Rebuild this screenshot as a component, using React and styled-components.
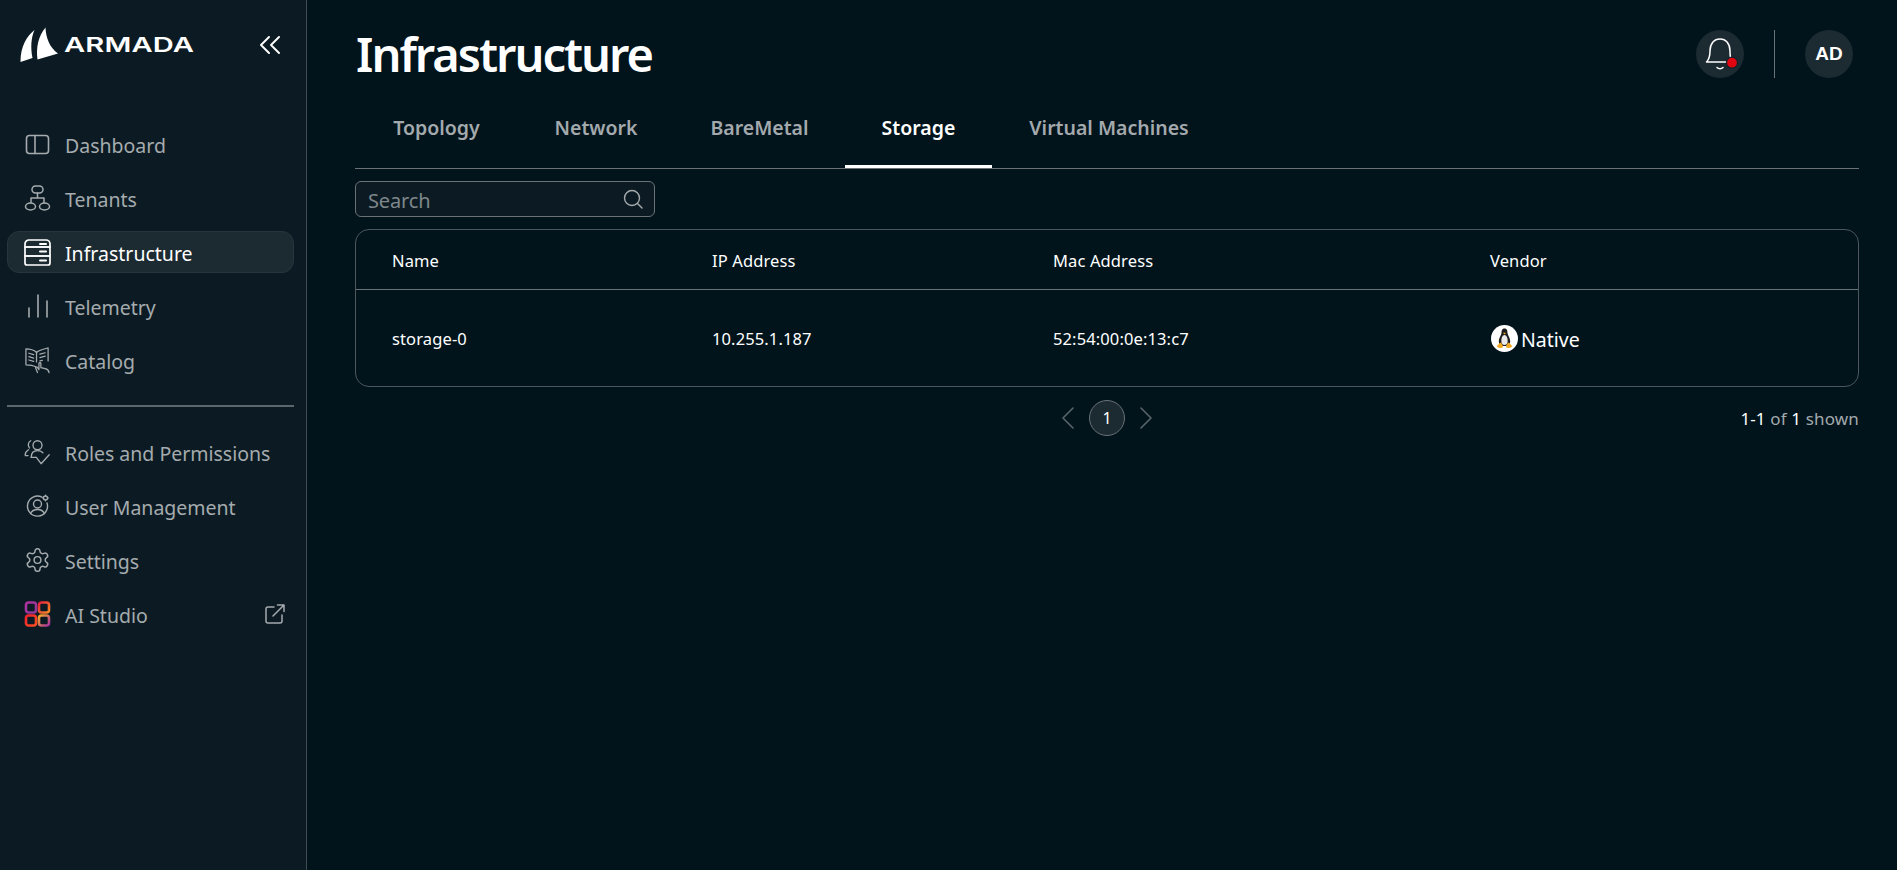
import React from "react";
import styled, { createGlobalStyle } from "styled-components";

const Global = createGlobalStyle`
  html, body { margin: 0; padding: 0; height: 100%; background: #01141c; overflow: hidden; }
  * { box-sizing: border-box; }
  body { font-family: "Noto Sans", "Open Sans", sans-serif; }
`;

const Page = styled.div`
  display: flex;
  width: 1897px;
  height: 870px;
  background: #01141c;
  color: #fff;
`;

const Sidebar = styled.aside`
  width: 307px;
  flex: none;
  height: 100%;
  background: #0c1b23;
  border-right: 1px solid #414c52;
  padding: 0 12px 0 7px;
  display: flex;
  flex-direction: column;
`;

const Brand = styled.div`
  height: 123px;
  display: flex;
  align-items: flex-start;
  justify-content: space-between;
  padding: 27px 13px 0 12px;
`;

const LogoWrap = styled.div`
  display: flex;
  align-items: center;
  gap: 5px;
  height: 36px;
`;

const LogoWord = styled.span`
  font-family: "Inter", sans-serif;
  font-weight: 600;
  font-size: 20.5px;
  letter-spacing: 0.1px;
  display: inline-block;
  transform: scaleX(1.42);
  transform-origin: left center;
  line-height: 1;
  color: #fff;
`;

const Collapse = styled.button`
  background: none;
  border: 0;
  padding: 0;
  margin-top: 9px;
  display: flex;
  color: #fff;
`;

const NavList = styled.nav`
  display: flex;
  flex-direction: column;
  gap: 12px;
`;

const NavItem = styled.a`
  height: 42px;
  display: flex;
  align-items: center;
  gap: 14px;
  padding: 0 8px 0 16px;
  border-radius: 12px;
  border: 1px solid ${(p) => (p.$active ? "#27353c" : "transparent")};
  background: ${(p) => (p.$active ? "#1c2a32" : "transparent")};
  color: ${(p) => (p.$active ? "#ffffff" : "#a5abae")};
  font-size: 19.5px;
  line-height: 1;
`;

const NavIcon = styled.span`
  width: 27px;
  height: 30px;
  flex: none;
  display: flex;
  align-items: center;
  justify-content: center;
  color: ${(p) => (p.$active ? "#ffffff" : "#a5abae")};
`;

const NavLabel = styled.span`
  flex: 1;
  white-space: nowrap;
  padding-top: 3px;
`;

const Rule = styled.hr`
  border: 0;
  height: 2px;
  background: #5c666b;
  margin: 24px 0 24px;
`;

const Main = styled.main`
  flex: 1;
  min-width: 0;
  padding: 30px 38px 0 48px;
  display: flex;
  flex-direction: column;
`;

const TopBar = styled.header`
  height: 48px;
  display: flex;
  align-items: center;
  justify-content: space-between;
  padding-right: 6px;
`;

const Title = styled.h1`
  margin: 0 0 0 1px;
  font-size: 47px;
  font-weight: 600;
  letter-spacing: -2px;
  line-height: 48px;
  color: #fff;
`;

const TopActions = styled.div`
  display: flex;
  align-items: center;
`;

const RoundBtn = styled.div`
  width: 48px;
  height: 48px;
  border-radius: 50%;
  background: #1c2a32;
  display: flex;
  align-items: center;
  justify-content: center;
  font-family: "Liberation Sans", sans-serif;
  font-weight: 700;
  font-size: 19px;
  color: #fff;
`;

const VDivider = styled.div`
  width: 1px;
  height: 48px;
  background: #6a7377;
  margin: 0 30px;
`;

const Tabs = styled.div`
  margin-top: 10px;
  height: 81px;
  border-bottom: 1px solid #6a7276;
  display: flex;
`;

const Tab = styled.div`
  height: 80px;
  width: ${(p) => p.$w}px;
  display: flex;
  align-items: center;
  justify-content: center;
  font-size: 19.5px;
  font-weight: 600;
  letter-spacing: 0;
  color: ${(p) => (p.$active ? "#ffffff" : "#a3a9ac")};
  border-bottom: 3px solid ${(p) => (p.$active ? "#ffffff" : "transparent")};
  padding-top: 1px;
`;

const SearchBox = styled.div`
  margin-top: 12px;
  width: 300px;
  height: 36px;
  border: 1px solid #6a7276;
  border-radius: 6px;
  background: #0c1b23;
  display: flex;
  align-items: center;
  justify-content: space-between;
  padding: 2px 10px 0 12px;
  color: #7e878b;
  font-size: 20px;
  letter-spacing: -0.15px;
`;

const SearchIcon = styled.svg`
  width: 22px;
  height: 22px;
  margin-top: -2px;
  color: #a5abae;
`;

const TableCard = styled.div`
  margin-top: 12px;
  border: 1px solid #4d575c;
  border-radius: 14px;
  height: 158px;
`;

const Row = styled.div`
  display: grid;
  grid-template-columns: 320px 341px 437px 1fr;
  align-items: center;
  padding-left: 36px;
  height: ${(p) => p.$h}px;
  padding-top: ${(p) => (p.$head ? 1 : 0)}px;
  border-bottom: ${(p) => (p.$head ? "1px solid #6a7276" : "none")};
  font-size: 16.5px;
  letter-spacing: 0.12px;
  color: #fff;
`;

const VendorCell = styled.div`
  display: flex;
  align-items: center;
  gap: 3px;
  padding-left: 1px;
  font-size: 19.5px;
  letter-spacing: 0;
`;

const VendorName = styled.span`
  padding-top: 2px;
`;

const TuxBadge = styled.svg`
  width: 27px;
  height: 27px;
  flex: none;
`;

const Footer = styled.div`
  margin-top: 13px;
  display: grid;
  grid-template-columns: 1fr auto 1fr;
  align-items: center;
  height: 36px;
`;

const Pager = styled.div`
  grid-column: 2;
  display: flex;
  align-items: center;
  gap: 14px;
  color: #596469;
`;

const PageNum = styled.div`
  width: 36px;
  height: 36px;
  border-radius: 50%;
  background: #1c2a32;
  border: 1px solid #6a7276;
  display: flex;
  align-items: center;
  justify-content: center;
  color: #fff;
  font-size: 16px;
`;

const Shown = styled.div`
  justify-self: end;
  font-size: 17px;
  letter-spacing: 0.15px;
  color: #a3a9ac;
`;

const Strong = styled.span`
  color: #fff;
`;

const S = { fill: "none", stroke: "currentColor", strokeLinecap: "round", strokeLinejoin: "round" };

const Logo = () => (
  <svg width="40" height="36" viewBox="0 0 40 36" fill="#fff">
    <path d="M15.5 3 C8 9 1.5 19 1.5 35 L13.5 31 C11.5 21 12 11 15.5 3 Z" />
    <path d="M27 0 L26.5 1 C27 11 31 21 39 26.5 L18.5 32.5 C17 21 19 9 27 0 Z" />
  </svg>
);

const IconDashboard = () => (
  <svg width="25" height="21" viewBox="0 0 25 21" {...S} strokeWidth="1.6">
    <rect x="1.5" y="1.5" width="22" height="18" rx="3" />
    <path d="M10 1.5 V19.5" />
  </svg>
);
const IconTenants = () => (
  <svg width="27" height="26" viewBox="0 0 27 26" {...S} strokeWidth="1.5">
    <rect x="8" y="1" width="11" height="7" rx="3.5" />
    <path d="M13.5 8 V13 M7 17.5 V13 H20 V17.5" />
    <ellipse cx="6.5" cy="21.5" rx="5" ry="3.5" />
    <ellipse cx="20.5" cy="21.5" rx="5" ry="3.5" />
  </svg>
);
const IconInfra = () => (
  <svg width="27" height="27" viewBox="0 0 27 27" {...S} strokeWidth="1.7">
    <path d="M1 8 V5 A4 4 0 0 1 5 1 H22 A4 4 0 0 1 26 5 V8 Z" />
    <path d="M1 8 H26 V17 H1 Z" />
    <path d="M1 17 H26 V24 A2 2 0 0 1 24 26 H3 A2 2 0 0 1 1 24 Z" />
    <path d="M16 5 H22 M16 12.5 H22 M16 21.5 H22" strokeWidth="2" />
  </svg>
);
const IconTelemetry = () => (
  <svg width="24" height="26" viewBox="0 0 24 26" {...S} strokeWidth="1.6">
    <path d="M3 24 V15 M12 24 V2 M21 24 V8" />
  </svg>
);
const IconCatalog = () => (
  <svg width="28" height="28" viewBox="0 0 28 28" {...S} strokeWidth="1.3">
    <path d="M13 6 C10 3.5 6 2.5 2 2.5 V19 C6 19 9.5 19.5 12 21" />
    <path d="M13 6 C16 3.5 21 2.5 25 1.5 V15" />
    <path d="M13 6 V16" />
    <path d="M5 7 L10 8.5 M5 10.5 L10 12 M5 14 L10 15.5 M16.5 8 L22 6.5 M16.5 11.5 L22 10 M16.5 15 L19 14.5" />
    <path d="M14 27 L12 22 C12 21 13.5 21 14 22 L15.5 24 V17.5 C15.5 16.3 17.5 16.3 17.5 17.5 V22 L22 23 C24 23.5 25.5 24 26 27" />
  </svg>
);
const IconRoles = () => (
  <svg width="30" height="30" viewBox="0 0 30 30" {...S} strokeWidth="1.5">
    <circle cx="15" cy="7.5" r="5" />
    <path d="M7.5 2.5 C4.5 4 4 8 6 10.5" />
    <path d="M5 12.5 C2.5 14 1 16.5 1.5 19 L4.5 19" />
    <path d="M8 21 C8 16 10.5 13.5 15 13.5 C18 13.5 20 14.5 21 16" />
    <path d="M8 21 H14 M14.5 22 L19 28 L28 18" />
  </svg>
);
const IconUser = () => (
  <svg width="24" height="24" viewBox="0 0 24 24" {...S} strokeWidth="1.4">
    <path d="M16 3.2 A10 10 0 1 0 21 9" />
    <circle cx="11.5" cy="10" r="4" />
    <path d="M4.5 19.5 C6 16.5 8.5 15.5 11.5 15.5 C14.5 15.5 17 16.5 18.5 19.5" />
    <circle cx="19.5" cy="4" r="2" />
    <path d="M19.5 1 V2 M19.5 6 V7 M16.5 4 H17.5 M21.5 4 H22.5" strokeWidth="1" />
  </svg>
);
const IconSettings = () => (
  <svg width="28" height="28" viewBox="0 0 24 24" {...S} strokeWidth="1.3">
    <path d="M12.22 2h-.44a2 2 0 0 0-2 2v.18a2 2 0 0 1-1 1.73l-.43.25a2 2 0 0 1-2 0l-.15-.08a2 2 0 0 0-2.73.73l-.22.38a2 2 0 0 0 .73 2.73l.15.1a2 2 0 0 1 1 1.72v.51a2 2 0 0 1-1 1.74l-.15.09a2 2 0 0 0-.73 2.73l.22.38a2 2 0 0 0 2.73.73l.15-.08a2 2 0 0 1 2 0l.43.25a2 2 0 0 1 1 1.73V20a2 2 0 0 0 2 2h.44a2 2 0 0 0 2-2v-.18a2 2 0 0 1 1-1.73l.43-.25a2 2 0 0 1 2 0l.15.08a2 2 0 0 0 2.73-.73l.22-.39a2 2 0 0 0-.73-2.73l-.15-.08a2 2 0 0 1-1-1.74v-.5a2 2 0 0 1 1-1.74l.15-.09a2 2 0 0 0 .73-2.73l-.22-.38a2 2 0 0 0-2.73-.73l-.15.08a2 2 0 0 1-2 0l-.43-.25a2 2 0 0 1-1-1.73V4a2 2 0 0 0-2-2z" />
    <circle cx="12" cy="12" r="3" />
  </svg>
);
const IconStudio = () => (
  <svg width="28" height="28" viewBox="0 0 27 27" fill="none" strokeWidth="2.6">
    <defs>
      <linearGradient id="ga" x1="0" y1="0" x2="1" y2="1">
        <stop offset="0" stopColor="#b0309f" />
        <stop offset="1" stopColor="#8a3a9a" />
      </linearGradient>
      <linearGradient id="gb" x1="0" y1="0" x2="1" y2="1">
        <stop offset="0" stopColor="#e8203f" />
        <stop offset="1" stopColor="#f58a20" />
      </linearGradient>
      <linearGradient id="gc" x1="0" y1="0" x2="1" y2="1">
        <stop offset="0" stopColor="#f5202e" />
        <stop offset="1" stopColor="#f8501f" />
      </linearGradient>
      <linearGradient id="gd" x1="0" y1="0" x2="1" y2="1">
        <stop offset="0" stopColor="#fba824" />
        <stop offset="1" stopColor="#a4309f" />
      </linearGradient>
    </defs>
    <rect x="2" y="2" width="10" height="10" rx="2.5" stroke="url(#ga)" />
    <rect x="15" y="2" width="10" height="10" rx="2.5" stroke="url(#gb)" />
    <rect x="2" y="15" width="10" height="10" rx="2.5" stroke="url(#gc)" />
    <rect x="15" y="15" width="10" height="10" rx="2.5" stroke="url(#gd)" />
  </svg>
);
const IconExternal = () => (
  <svg width="20" height="20" viewBox="0 0 20 20" {...S} strokeWidth="1.5" color="#a5abae">
    <path d="M9 3 H3 A2 2 0 0 0 1 5 V17 A2 2 0 0 0 3 19 H15 A2 2 0 0 0 17 17 V11" />
    <path d="M8 12 L19 1 M12.5 1 H19 V7.5" />
  </svg>
);
const Chevron = ({ dir }) => (
  <svg width="14" height="22" viewBox="0 0 14 22" {...S} strokeWidth="1.6">
    <path d={dir === "left" ? "M12 1 L2 11 L12 21" : "M2 1 L12 11 L2 21"} />
  </svg>
);
const Bell = () => (
  <svg width="48" height="48" viewBox="0 0 48 48" fill="none" strokeLinecap="round" strokeLinejoin="round">
    <path d="M10.5 32 C13 29.5 14 26.5 14 21 C14 13.5 18 9 24 9 C30 9 34 13.5 34 21 C34 26.5 34.5 29.5 36 32 Z" stroke="#fff" strokeWidth="1.5" />
    <path d="M21 37.5 C22.5 39 25.5 39 27 37.5" stroke="#fff" strokeWidth="1.5" />
    <circle cx="36" cy="32.7" r="5.5" fill="#e0060f" stroke="#10202a" strokeWidth="1.2" />
  </svg>
);
const Tux = () => (
  <TuxBadge viewBox="0 0 27 27">
    <circle cx="13.5" cy="13.5" r="13.5" fill="#fff" />
    <path d="M13.5 3.5 C11 3.5 10.5 5.8 10.5 8 C10.5 10 8 12.5 7.8 16 C7.7 18.5 9.5 21 13.5 21 C17.5 21 19.3 18.5 19.2 16 C19 12.5 16.5 10 16.5 8 C16.5 5.8 16 3.5 13.5 3.5 Z" fill="#1d1d1d" />
    <path d="M13.5 10 C11.5 10 10.3 13 10.3 16 C10.3 18.5 11.5 20 13.5 20 C15.5 20 16.7 18.5 16.7 16 C16.7 13 15.5 10 13.5 10 Z" fill="#e9e9e9" />
    <path d="M12 7.8 L15 7.8 L13.5 9.5 Z" fill="#f3a81d" />
    <path d="M9.5 17.5 L5.8 21 C6.5 22.8 9.5 23.5 11.8 22.5 C12 20.5 11 18.5 9.5 17.5 Z" fill="#f3a81d" />
    <path d="M17.5 17.5 L21.2 21 C20.5 22.8 17.5 23.5 15.2 22.5 C15 20.5 16 18.5 17.5 17.5 Z" fill="#f3a81d" />
  </TuxBadge>
);

const mainNav = [
  ["Dashboard", IconDashboard],
  ["Tenants", IconTenants],
  ["Infrastructure", IconInfra, true],
  ["Telemetry", IconTelemetry],
  ["Catalog", IconCatalog],
];
const lowerNav = [
  ["Roles and Permissions", IconRoles],
  ["User Management", IconUser],
  ["Settings", IconSettings],
  ["AI Studio", IconStudio, false, true],
];

const renderItem = ([label, Ico, active, ext]) => (
  <NavItem key={label} $active={active}>
    <NavIcon $active={active}>
      <Ico />
    </NavIcon>
    <NavLabel>{label}</NavLabel>
    {ext && <IconExternal />}
  </NavItem>
);

const tabs = [
  ["Topology", 163],
  ["Network", 156],
  ["BareMetal", 171],
  ["Storage", 147, true],
  ["Virtual Machines", 234],
];

export default function App() {
  return (
    <Page>
      <Global />
      <Sidebar>
        <Brand>
          <LogoWrap>
            <Logo />
            <LogoWord>ARMADA</LogoWord>
          </LogoWrap>
          <Collapse aria-label="Collapse">
            <svg width="22" height="18" viewBox="0 0 22 18" {...S} strokeWidth="1.9">
              <path d="M10 1 L2 9 L10 17 M20 1 L12 9 L20 17" />
            </svg>
          </Collapse>
        </Brand>
        <NavList>{mainNav.map(renderItem)}</NavList>
        <Rule />
        <NavList>{lowerNav.map(renderItem)}</NavList>
      </Sidebar>
      <Main>
        <TopBar>
          <Title>Infrastructure</Title>
          <TopActions>
            <RoundBtn>
              <Bell />
            </RoundBtn>
            <VDivider />
            <RoundBtn>AD</RoundBtn>
          </TopActions>
        </TopBar>
        <Tabs>
          {tabs.map(([t, w, a]) => (
            <Tab key={t} $w={w} $active={a}>
              {t}
            </Tab>
          ))}
        </Tabs>
        <SearchBox>
          Search
          <SearchIcon viewBox="0 0 22 22" {...S} strokeWidth="1.4">
            <circle cx="10" cy="10" r="7.5" />
            <path d="M15.5 15.5 L20 20" />
          </SearchIcon>
        </SearchBox>
        <TableCard>
          <Row $head $h={60}>
            <div>Name</div>
            <div>IP Address</div>
            <div>Mac Address</div>
            <div>Vendor</div>
          </Row>
          <Row $h={96}>
            <div>storage-0</div>
            <div>10.255.1.187</div>
            <div>52:54:00:0e:13:c7</div>
            <VendorCell>
              <Tux />
              <VendorName>Native</VendorName>
            </VendorCell>
          </Row>
        </TableCard>
        <Footer>
          <Pager>
            <Chevron dir="left" />
            <PageNum>1</PageNum>
            <Chevron dir="right" />
          </Pager>
          <Shown>
            <Strong>1-1</Strong> of <Strong>1</Strong> shown
          </Shown>
        </Footer>
      </Main>
    </Page>
  );
}
